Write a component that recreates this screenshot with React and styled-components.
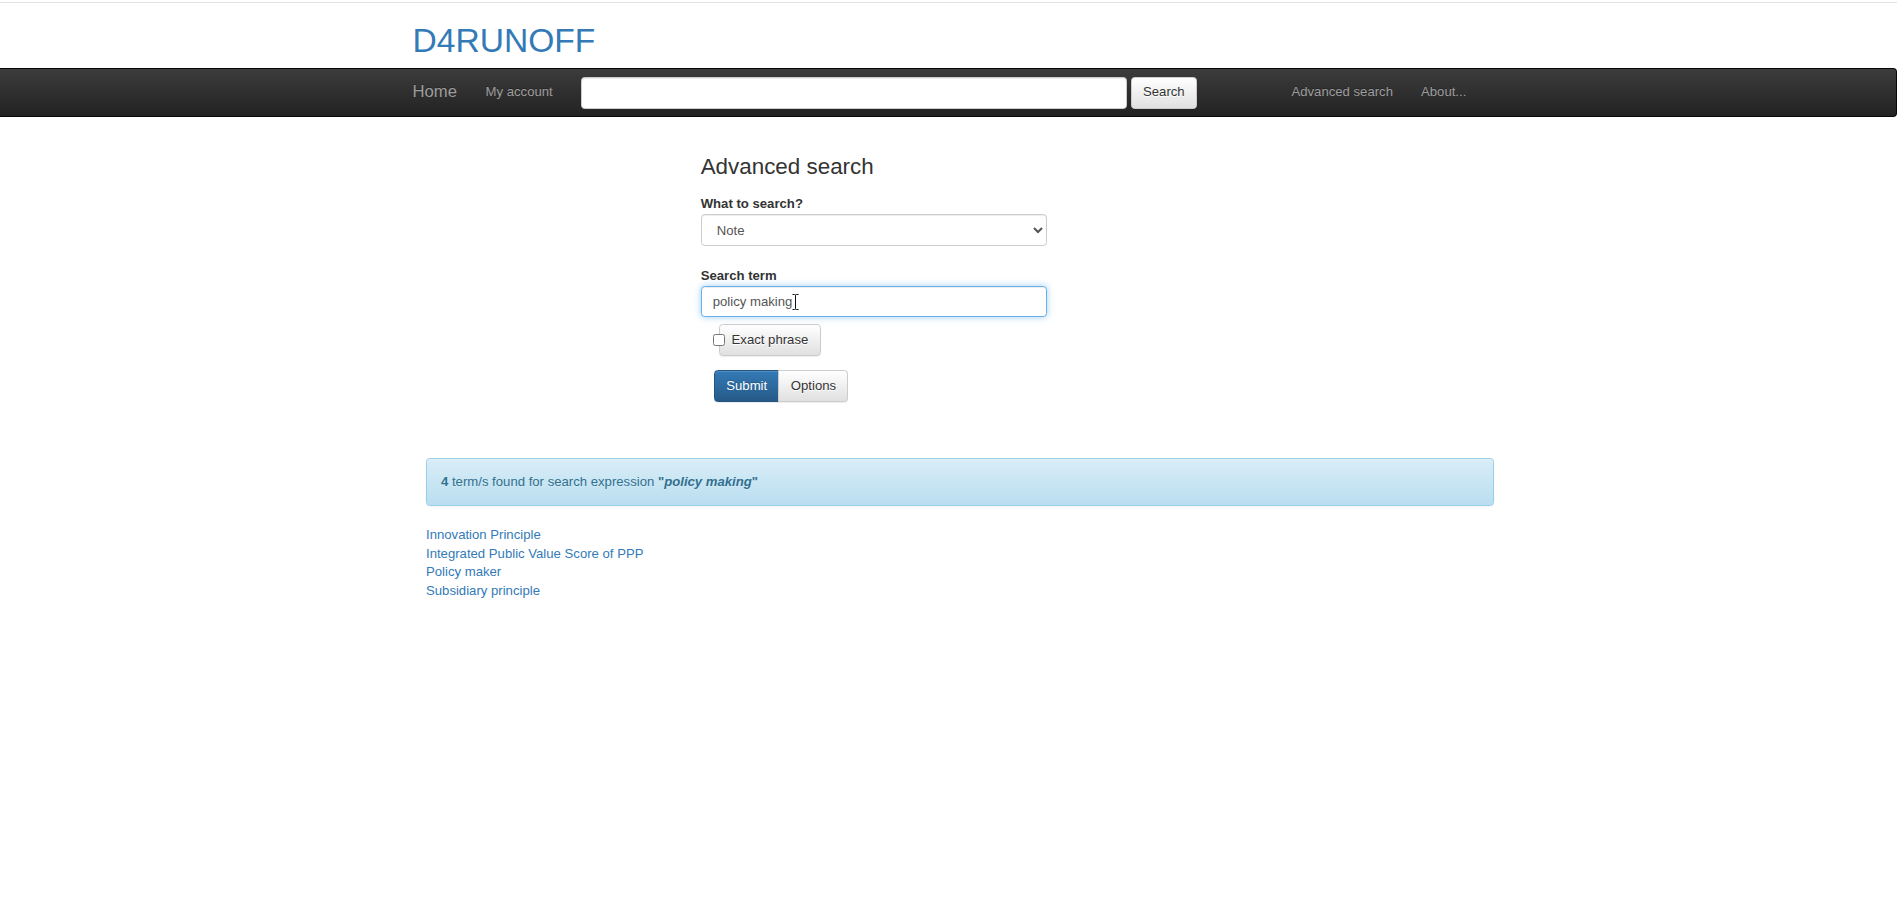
import React from "react";
import styled, { createGlobalStyle } from "styled-components";

const GlobalStyle = createGlobalStyle`
  html, body { margin: 0; padding: 0; background: #fff; }
  body {
    font-family: "Liberation Sans", Arial, Helvetica, sans-serif;
    font-size: 13.15px;
    line-height: 18.6px;
    color: #333;
  }
  *, *::before, *::after { box-sizing: border-box; }
`;

const Page = styled.div`
  padding-top: 2px;
  min-height: 922px;
`;

const TopRule = styled.div`
  height: 1px;
  background: #e3e3e3;
`;

const Container = styled.div`
  width: 1096px;
  margin-left: calc(50% - 549.5px);
`;

const Header = styled.header`
  padding: 19px 0 9px;
`;

const Logo = styled.a`
  display: inline-block;
  padding-left: 13.5px;
  font-size: 33.6px;
  line-height: 37px;
  color: #337ab7;
  text-decoration: none;
`;

const Navbar = styled.nav`
  height: 49px;
  background-image: linear-gradient(to bottom, #3c3c3c 0, #222 100%);
  border: 1px solid #080808;
  border-left: none;
  border-radius: 0 4px 4px 0;
`;

const NavInner = styled.div`
  display: flex;
  align-items: center;
  height: 47px;
`;

const Brand = styled.a`
  padding-left: 14px;
  margin-right: 28.5px;
  font-size: 16.7px;
  line-height: 18.6px;
  color: #9d9d9d;
  text-decoration: none;
  text-shadow: 0 -1px 0 rgba(0, 0, 0, 0.25);
`;

const NavLink = styled.a`
  margin-left: ${(p) => p.$gap || 0}px;
  font-size: 13.15px;
  color: #9d9d9d;
  text-decoration: none;
  text-shadow: 0 -1px 0 rgba(0, 0, 0, 0.25);
  white-space: nowrap;
`;

const NavSearch = styled.form`
  display: flex;
  align-items: center;
  gap: 4px;
  margin-left: 28px;
`;

const NavInput = styled.input`
  width: 546px;
  height: 32px;
  padding: 0 11px;
  border: 1px solid #ccc;
  border-radius: 3.7px;
  background: #fff;
  box-shadow: inset 0 1px 1px rgba(0, 0, 0, 0.075);
  font: inherit;
  color: #555;
  outline: none;
`;

const Button = styled.button`
  position: relative;
  height: 32px;
  padding: 0 11.3px;
  font-family: inherit;
  font-size: 13.15px;
  line-height: 18.6px;
  border-radius: ${(p) => p.$radius || "3.7px"};
  border: 1px solid ${(p) => (p.$primary ? "#245580" : "#ccc")};
  color: ${(p) => (p.$primary ? "#fff" : "#333")};
  background-image: ${(p) =>
    p.$primary
      ? "linear-gradient(to bottom, #337ab7 0, #265a88 100%)"
      : "linear-gradient(to bottom, #fff 0, #e0e0e0 100%)"};
  text-shadow: ${(p) =>
    p.$primary ? "0 -1px 0 rgba(0,0,0,.2)" : "0 1px 0 #fff"};
  box-shadow: inset 0 1px 0 rgba(255, 255, 255, 0.15),
    0 1px 1px rgba(0, 0, 0, 0.075);
  cursor: pointer;
  white-space: nowrap;
  display: inline-flex;
  align-items: center;
  margin-left: ${(p) => p.$ml || 0}px;
`;

const Main = styled.main`
  padding-top: 38px;
`;

const FormColumn = styled.form`
  margin-left: 301.7px;
  width: 346px;
`;

const Heading = styled.h3`
  margin: 0;
  font-size: 22.4px;
  line-height: 24.5px;
  font-weight: 500;
  color: #333;
`;

const FieldGroup = styled.div`
  margin-top: ${(p) => p.$mt}px;
`;

const Label = styled.label`
  display: block;
  margin-bottom: ${(p) => p.$mb ?? 1}px;
  font-weight: bold;
  color: #333;
`;

const Select = styled.select`
  display: block;
  width: 346px;
  height: 32px;
  padding: 0 11px;
  font-family: inherit;
  font-size: 13.15px;
  color: #555;
  background: #fff;
  border: 1px solid #ccc;
  border-radius: 3.7px;
  box-shadow: inset 0 1px 1px rgba(0, 0, 0, 0.075);
  outline: none;
`;

const InputWrap = styled.div`
  position: relative;
`;

const TextInput = styled.input`
  display: block;
  width: 346px;
  height: 31px;
  padding: 0 11px;
  font-family: inherit;
  font-size: 13.15px;
  color: #555;
  background: #fff;
  border: 1px solid #66afe9;
  border-radius: 3.7px;
  box-shadow: inset 0 1px 1px rgba(0, 0, 0, 0.075),
    0 0 7px rgba(102, 175, 233, 0.6);
  outline: none;
`;

const IBeam = styled.svg`
  position: absolute;
  left: 90.5px;
  top: 6.5px;
  pointer-events: none;
`;

const CheckRow = styled.div`
  display: flex;
  align-items: center;
  margin-top: 6.5px;
  padding-left: 12.6px;
`;

const Checkbox = styled.input`
  position: relative;
  z-index: 1;
  width: 12px;
  height: 12px;
  margin: 0 -6px 0 0;
`;

const ButtonGroup = styled.div`
  display: flex;
  margin-top: 14px;
  padding-left: 13.3px;
`;

const Alert = styled.div`
  margin: 56px 0 0 27px;
  width: 1068px;
  padding: 14px;
  border: 1px solid #9acfea;
  border-radius: 3.7px;
  color: #31708f;
  background-image: linear-gradient(to bottom, #d9edf7 0, #b9def0 100%);
  box-shadow: inset 0 1px 0 rgba(255, 255, 255, 0.25),
    0 1px 2px rgba(0, 0, 0, 0.05);
  text-shadow: 0 1px 0 rgba(255, 255, 255, 0.2);
`;

const ResultList = styled.ul`
  list-style: none;
  margin: 19.7px 0 0 27px;
  padding: 0;
`;

const ResultLink = styled.a`
  display: block;
  color: #337ab7;
  text-decoration: none;
`;

const results = [
  "Innovation Principle",
  "Integrated Public Value Score of PPP",
  "Policy maker",
  "Subsidiary principle",
];

const beamPath =
  "M1.5 1.5 H3.5 Q4.5 1.5 4.5 2.5 Q4.5 1.5 5.5 1.5 H7.5 M4.5 2.5 V15.5 M1.5 16.5 H3.5 Q4.5 16.5 4.5 15.5 Q4.5 16.5 5.5 16.5 H7.5";

export default function App() {
  return (
    <Page>
      <GlobalStyle />
      <TopRule />
      <Header>
        <Container>
          <Logo href="#">D4RUNOFF</Logo>
        </Container>
      </Header>
      <Navbar>
        <Container>
          <NavInner>
            <Brand href="#">Home</Brand>
            <NavLink href="#">My account</NavLink>
            <NavSearch onSubmit={(e) => e.preventDefault()}>
              <NavInput type="text" />
              <Button type="submit">Search</Button>
            </NavSearch>
            <NavLink href="#" $gap={94.5}>
              Advanced search
            </NavLink>
            <NavLink href="#" $gap={28}>
              About...
            </NavLink>
          </NavInner>
        </Container>
      </Navbar>
      <Main>
        <Container>
          <FormColumn onSubmit={(e) => e.preventDefault()}>
            <Heading>Advanced search</Heading>
            <FieldGroup $mt={15}>
              <Label>What to search?</Label>
              <Select defaultValue="note">
                <option value="note">Note</option>
                <option value="term">Term</option>
              </Select>
            </FieldGroup>
            <FieldGroup $mt={21.2}>
              <Label $mb={0.5}>Search term</Label>
              <InputWrap>
                <TextInput type="text" defaultValue="policy making" />
                <IBeam width="9" height="18" viewBox="0 0 9 18">
                  <path
                    d={beamPath}
                    fill="none"
                    stroke="#fff"
                    strokeWidth="3"
                    strokeLinecap="round"
                  />
                  <path d={beamPath} fill="none" stroke="#111" strokeWidth="1" />
                </IBeam>
              </InputWrap>
            </FieldGroup>
            <CheckRow>
              <Checkbox type="checkbox" />
              <Button as="label">Exact phrase</Button>
            </CheckRow>
            <ButtonGroup>
              <Button type="submit" $primary $radius="3.7px 0 0 3.7px">
                Submit
              </Button>
              <Button type="button" $radius="0 3.7px 3.7px 0" $ml={-1}>
                Options
              </Button>
            </ButtonGroup>
          </FormColumn>
          <Alert>
            <b>4</b> term/s found for search expression{" "}
            <b>
              "<i>policy making</i>"
            </b>
          </Alert>
          <ResultList>
            {results.map((r) => (
              <li key={r}>
                <ResultLink href="#">{r}</ResultLink>
              </li>
            ))}
          </ResultList>
        </Container>
      </Main>
    </Page>
  );
}
